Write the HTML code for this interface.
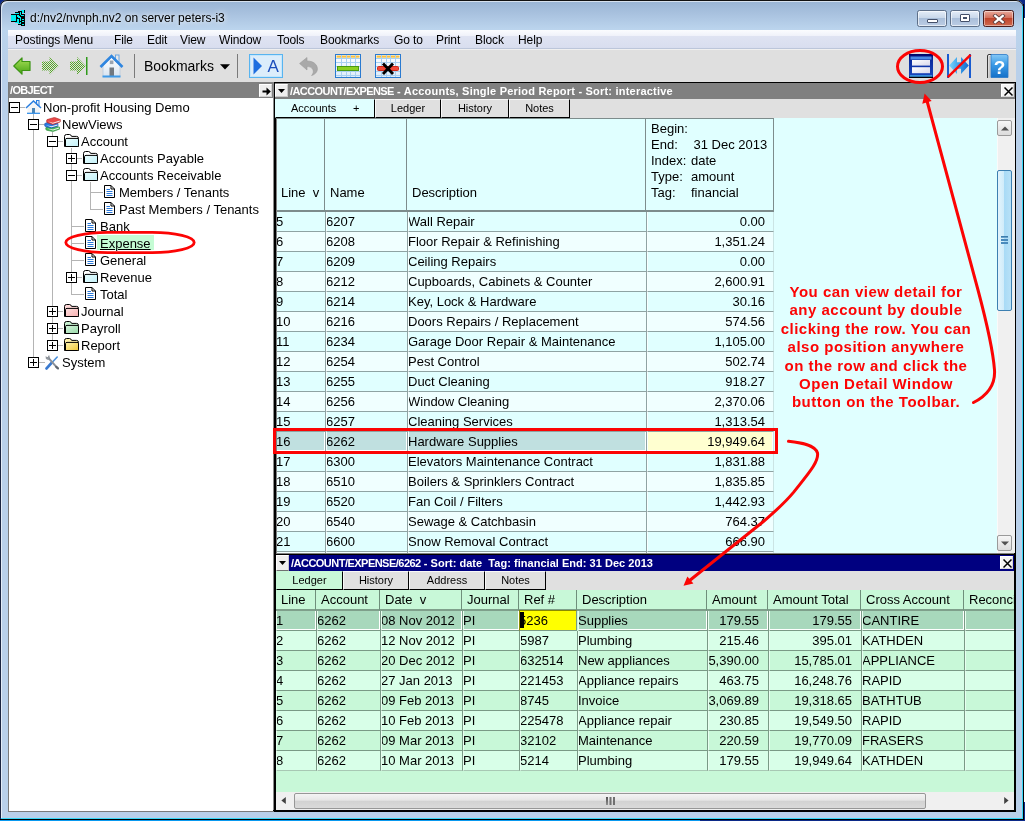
<!DOCTYPE html>
<html><head><meta charset="utf-8"><title>NewViews</title>
<style>
*{box-sizing:border-box;margin:0;padding:0}
html,body{width:1025px;height:821px;overflow:hidden;background:#0c2a88;font-family:"Liberation Sans",sans-serif;font-size:13px;color:#000}
.abs{position:absolute}
#win{will-change:transform;position:absolute;left:0;top:0;width:1023px;height:818px;border-radius:7px 7px 0 0;background:linear-gradient(#98b3d3 0px,#a9c2df 14px,#bbd4ed 29px,#b9d0ea 60px,#b9d0ea 100%);overflow:hidden;box-shadow:inset 0 1px 0 #111,inset 1px 0 0 #1a2440, inset 2px 2px 0 rgba(255,255,255,.6)}
#title{left:30px;top:10px;font-size:12px;line-height:16px;white-space:nowrap;color:#000;text-shadow:0 0 5px rgba(255,255,255,.9),0 0 8px rgba(255,255,255,.7)}
#menubar{left:8px;top:30px;width:1008px;height:19px;background:linear-gradient(#fbfcfe 0,#f0f2fa 30%,#dfe3f2 34%,#d9deef 92%,#bcc6da 96%,#bcc6da 100%)}
#menubar span{position:absolute;top:2px;font-size:12px;letter-spacing:-0.1px;line-height:16px;white-space:nowrap}
#toolbar{left:8px;top:49px;width:1008px;height:33px;background:#dfdfdf;border-top:1px solid #f0f0f0}
.phead{background:#808080;color:#fff;font-weight:bold;font-size:11px;line-height:16px;white-space:nowrap;overflow:hidden}
.tree{left:8px;top:98px;width:265px;height:713px;background:#fff}
.tree .t{position:absolute;white-space:nowrap;font-size:13px;line-height:17px;height:17px}
.vl{position:absolute;width:1px;background:#b4b4b4}
.hl{position:absolute;height:1px;background:#b4b4b4}
.box{position:absolute;width:11px;height:11px;border:1px solid #000;background:#fff}
.box:before{content:"";position:absolute;left:1px;top:4px;width:7px;height:1px;background:#000}
.box.p:after{content:"";position:absolute;left:4px;top:1px;width:1px;height:7px;background:#000}
.tabs{background:#e0e0e0}
.tab{position:absolute;top:0;height:19px;border:1px solid;border-color:#f8f8f8 #000 #000 #f8f8f8;background:#e0e0e0;font-size:11px;line-height:16px;text-align:center;white-space:nowrap}
.cell{position:absolute;height:20px;border-right:1px solid #8fa3a3;border-bottom:1px solid #8fa3a3;border-left:1px solid #f8ffff;line-height:19px;white-space:nowrap;overflow:hidden;font-size:13px;text-indent:-1px}
.cell.r{text-align:right}
.hc{position:absolute;border-right:1px solid #7d8c8c;border-bottom:2px solid #7d8c8c;white-space:nowrap;overflow:hidden;font-size:13px}
.sbtn{position:absolute;background:linear-gradient(#f6f6f6,#dcdcdc);border:1px solid #9a9a9a;border-radius:2px}
</style></head><body>
<div id="win">

<svg class="abs" style="left:9px;top:8px" width="16" height="18" viewBox="0 0 16 18" shape-rendering="crispEdges"><rect x="12" y="2" width="3" height="1" fill="#00f0f0"/><rect x="15" y="2" width="1" height="1" fill="#000"/><rect x="9" y="3" width="4" height="1" fill="#000"/><rect x="13" y="3" width="2" height="1" fill="#00f0f0"/><rect x="15" y="3" width="1" height="1" fill="#000"/><rect x="6" y="4" width="5" height="1" fill="#000"/><rect x="11" y="4" width="1" height="1" fill="#00f0f0"/><rect x="12" y="4" width="1" height="1" fill="#000"/><rect x="13" y="4" width="2" height="1" fill="#00f0f0"/><rect x="15" y="4" width="1" height="1" fill="#000"/><rect x="6" y="5" width="4" height="1" fill="#00f0f0"/><rect x="10" y="5" width="1" height="1" fill="#000"/><rect x="11" y="5" width="1" height="1" fill="#00f0f0"/><rect x="12" y="5" width="1" height="1" fill="#000"/><rect x="2" y="6" width="9" height="1" fill="#000"/><rect x="11" y="6" width="1" height="1" fill="#00f0f0"/><rect x="12" y="6" width="4" height="1" fill="#000"/><rect x="2" y="7" width="5" height="1" fill="#00f0f0"/><rect x="7" y="7" width="1" height="1" fill="#000"/><rect x="8" y="7" width="2" height="1" fill="#00f0f0"/><rect x="10" y="7" width="2" height="1" fill="#000"/><rect x="12" y="7" width="3" height="1" fill="#00f0f0"/><rect x="15" y="7" width="1" height="1" fill="#000"/><rect x="2" y="8" width="5" height="1" fill="#00f0f0"/><rect x="7" y="8" width="1" height="1" fill="#000"/><rect x="8" y="8" width="3" height="1" fill="#00f0f0"/><rect x="11" y="8" width="5" height="1" fill="#000"/><rect x="2" y="9" width="5" height="1" fill="#00f0f0"/><rect x="7" y="9" width="2" height="1" fill="#000"/><rect x="9" y="9" width="3" height="1" fill="#00f0f0"/><rect x="12" y="9" width="4" height="1" fill="#000"/><rect x="2" y="10" width="5" height="1" fill="#00f0f0"/><rect x="7" y="10" width="4" height="1" fill="#000"/><rect x="11" y="10" width="1" height="1" fill="#00f0f0"/><rect x="12" y="10" width="4" height="1" fill="#000"/><rect x="2" y="11" width="5" height="1" fill="#00f0f0"/><rect x="7" y="11" width="1" height="1" fill="#000"/><rect x="8" y="11" width="2" height="1" fill="#00f0f0"/><rect x="10" y="11" width="1" height="1" fill="#000"/><rect x="11" y="11" width="1" height="1" fill="#00f0f0"/><rect x="12" y="11" width="1" height="1" fill="#000"/><rect x="13" y="11" width="2" height="1" fill="#00f0f0"/><rect x="15" y="11" width="1" height="1" fill="#000"/><rect x="2" y="12" width="5" height="1" fill="#00f0f0"/><rect x="7" y="12" width="1" height="1" fill="#000"/><rect x="8" y="12" width="2" height="1" fill="#00f0f0"/><rect x="10" y="12" width="1" height="1" fill="#000"/><rect x="11" y="12" width="1" height="1" fill="#00f0f0"/><rect x="12" y="12" width="4" height="1" fill="#000"/><rect x="2" y="13" width="6" height="1" fill="#000"/><rect x="8" y="13" width="2" height="1" fill="#00f0f0"/><rect x="10" y="13" width="3" height="1" fill="#000"/><rect x="13" y="13" width="2" height="1" fill="#00f0f0"/><rect x="15" y="13" width="1" height="1" fill="#000"/><rect x="6" y="14" width="4" height="1" fill="#00f0f0"/><rect x="10" y="14" width="1" height="1" fill="#000"/><rect x="11" y="14" width="1" height="1" fill="#00f0f0"/><rect x="12" y="14" width="4" height="1" fill="#000"/><rect x="9" y="15" width="3" height="1" fill="#00f0f0"/><rect x="12" y="15" width="4" height="1" fill="#000"/><rect x="9" y="16" width="4" height="1" fill="#000"/><rect x="13" y="16" width="2" height="1" fill="#00f0f0"/><rect x="15" y="16" width="1" height="1" fill="#000"/><rect x="12" y="17" width="4" height="1" fill="#000"/></svg>
<div id="title" class="abs">d:/nv2/nvnph.nv2 on server peters-i3</div>
<div class="abs" style="left:917px;top:10px;width:30px;height:17px;border:1px solid #5d6f88;border-radius:2.5px;background:linear-gradient(#e4edf8 0,#c9d8ea 45%,#aabfda 50%,#bccde4 100%);box-shadow:inset 0 0 0 1px rgba(255,255,255,.6)"><div class="abs" style="left:9px;top:8px;width:11px;height:4px;border:1px solid #44506a;background:#fff;border-radius:1px"></div></div>
<div class="abs" style="left:950px;top:10px;width:30px;height:17px;border:1px solid #5d6f88;border-radius:2.5px;background:linear-gradient(#e4edf8 0,#c9d8ea 45%,#aabfda 50%,#bccde4 100%);box-shadow:inset 0 0 0 1px rgba(255,255,255,.6)"><div class="abs" style="left:9px;top:3px;width:10px;height:8px;border:1px solid #44506a;background:#fff;border-radius:1px"><div class="abs" style="left:2px;top:2px;width:4px;height:2px;border:1px solid #44506a;background:#c9d8ea"></div></div></div>
<div class="abs" style="left:983px;top:10px;width:31px;height:17px;border:1px solid #4a1c1c;border-radius:2.5px;background:linear-gradient(#e8a99b 0,#d4705c 45%,#c0442c 50%,#cf6a4e 100%);box-shadow:inset 0 0 0 1px rgba(255,255,255,.45)"><svg class="abs" style="left:8px;top:3px" width="14" height="10" viewBox="0 0 14 10"><path d="M3.2 1.8 L10.8 8.2 M10.8 1.8 L3.2 8.2" stroke="#5a3a3a" stroke-width="3.8" stroke-linecap="square"/><path d="M3.2 1.8 L10.8 8.2 M10.8 1.8 L3.2 8.2" stroke="#fff" stroke-width="2.2" stroke-linecap="square"/></svg></div>
<div id="menubar" class="abs">
<span style="left:7px">Postings Menu</span>
<span style="left:106px">File</span>
<span style="left:139px">Edit</span>
<span style="left:172px">View</span>
<span style="left:211px">Window</span>
<span style="left:269px">Tools</span>
<span style="left:312px">Bookmarks</span>
<span style="left:386px">Go to</span>
<span style="left:428px">Print</span>
<span style="left:467px">Block</span>
<span style="left:510px">Help</span>
</div>
<div id="toolbar" class="abs">
<svg class="abs" style="left:5px;top:7px" width="18" height="18" viewBox="0 0 18 18"><defs><linearGradient id="gg" x1="0" y1="0" x2="0" y2="1"><stop offset="0" stop-color="#a8e058"/><stop offset="1" stop-color="#48a414"/></linearGradient></defs><path d="M0.8 9 L9 0.8 L9 4.5 L17 4.5 L17 13.5 L9 13.5 L9 17.2 Z" fill="url(#gg)" stroke="#3c9414" stroke-width="1.2" stroke-linejoin="round"/></svg>
<svg class="abs" style="left:33px;top:7px" width="18" height="18" viewBox="0 0 18 18"><defs><pattern id="dots" width="2" height="2" patternUnits="userSpaceOnUse"><rect width="2" height="2" fill="#dfdfdf"/><rect width="1" height="1" fill="#58a82a"/><rect x="1" y="1" width="1" height="1" fill="#58a82a"/></pattern></defs><path d="M17.6 9 L8.5 0 L8.5 4.5 L1 4.5 L1 13.5 L8.5 13.5 L8.5 18 Z" fill="url(#dots)"/></svg>
<svg class="abs" style="left:61px;top:7px" width="19" height="18" viewBox="0 0 19 18"><path d="M16.8 9 L8 0 L8 4.5 L1 4.5 L1 13.5 L8 13.5 L8 18 Z" fill="url(#dots)"/><rect x="17" y="0" width="1.5" height="18" fill="#2e9a1a"/></svg>
<svg class="abs" style="left:91px;top:3px" width="25" height="25" viewBox="0 0 25 25"><defs><linearGradient id="hb" x1="0" y1="0" x2="0" y2="1"><stop offset="0" stop-color="#ffffff"/><stop offset="1" stop-color="#d8e4f0"/></linearGradient></defs><rect x="16.5" y="2" width="3.5" height="7" fill="#e8e8e8" stroke="#6aa6e4" stroke-width="1"/><path d="M4 13 L12.5 4.5 L21 13 L21 23.5 L4 23.5 Z" fill="url(#hb)" stroke="#b8c8dc" stroke-width="0.8"/><path d="M1.5 14 L12.5 3 L23.5 14" fill="none" stroke="#2f86e0" stroke-width="2.6" stroke-linejoin="miter"/><rect x="10.5" y="14.5" width="4.5" height="9" fill="#707880"/><rect x="10.8" y="7.5" width="3.6" height="3.6" fill="#9aa4b0"/><rect x="3.5" y="22.5" width="18" height="2" fill="#3f9ae8"/></svg>
<div class="abs" style="left:126px;top:4px;width:1px;height:24px;background:#7a7a7a"></div>
<div class="abs" style="left:136px;top:7px;font-size:14px;line-height:18px;white-space:nowrap">Bookmarks</div>
<svg class="abs" style="left:212px;top:14px" width="10" height="6" viewBox="0 0 10 6"><path d="M0 0.3 H10 L5 5.6 Z" fill="#000"/></svg>
<div class="abs" style="left:229px;top:4px;width:1px;height:24px;background:#7a7a7a"></div>
<div class="abs" style="left:241px;top:4px;width:34px;height:24px;border:1px solid #58b4f0;background:#dcedfb;box-shadow:inset 0 0 0 1px #c4e6fc"><svg class="abs" style="left:3px;top:2px" width="10" height="18" viewBox="0 0 10 18"><path d="M0.5 0.6 L9 9 L0.5 17.4 Z" fill="#1e6ee0"/></svg><div class="abs" style="left:17.5px;top:2px;font-size:17px;line-height:20px;color:#1c4ebc">A</div></div>
<svg class="abs" style="left:291px;top:7px" width="19" height="19" viewBox="0 0 19 19"><path d="M0.6 6.5 L8 0.5 L8 4 C14.5 4 18.4 7.5 18.4 12 C18.4 15 16 17.5 12.6 18.6 C14.4 16.4 14.8 14.4 13.8 12.4 C12.6 10 10.4 9.6 8 9.6 L8 13 Z" fill="#a9a9a9" stroke="#9a9a9a" stroke-width=".6"/></svg>
<svg class="abs" style="left:327px;top:4px" width="26" height="24" viewBox="0 0 26 24"><defs><linearGradient id="tgins" x1="0" y1="0" x2="0" y2="1"><stop offset="0" stop-color="#ffffff"/><stop offset="1" stop-color="#dcecfa"/></linearGradient></defs><rect x="0.5" y="0.5" width="25" height="23" fill="url(#tgins)" stroke="#2a7ad0" stroke-width="1"/><rect x="1.5" y="1.5" width="23" height="2.2" fill="#f8c040"/><rect x="6" y="1" width="1" height="22" fill="#a8d0f0"/><rect x="11" y="1" width="1" height="22" fill="#a8d0f0"/><rect x="15" y="1" width="1" height="22" fill="#a8d0f0"/><rect x="20" y="1" width="1" height="22" fill="#a8d0f0"/><rect x="1" y="4" width="24" height="1" fill="#a8d0f0"/><rect x="1" y="8" width="24" height="1" fill="#a8d0f0"/><rect x="1" y="12" width="24" height="1" fill="#a8d0f0"/><rect x="1" y="17" width="24" height="1" fill="#a8d0f0"/><rect x="1" y="21" width="24" height="1" fill="#a8d0f0"/><rect x="2.5" y="12.5" width="21" height="4" fill="#8cd020" stroke="#4a9a10" stroke-width="1"/></svg>
<svg class="abs" style="left:367px;top:4px" width="26" height="24" viewBox="0 0 26 24"><defs><linearGradient id="tgdel" x1="0" y1="0" x2="0" y2="1"><stop offset="0" stop-color="#ffffff"/><stop offset="1" stop-color="#dcecfa"/></linearGradient></defs><rect x="0.5" y="0.5" width="25" height="23" fill="url(#tgdel)" stroke="#2a7ad0" stroke-width="1"/><rect x="1.5" y="1.5" width="23" height="2.2" fill="#f8c040"/><rect x="6" y="1" width="1" height="22" fill="#a8d0f0"/><rect x="11" y="1" width="1" height="22" fill="#a8d0f0"/><rect x="15" y="1" width="1" height="22" fill="#a8d0f0"/><rect x="20" y="1" width="1" height="22" fill="#a8d0f0"/><rect x="1" y="4" width="24" height="1" fill="#a8d0f0"/><rect x="1" y="8" width="24" height="1" fill="#a8d0f0"/><rect x="1" y="12" width="24" height="1" fill="#a8d0f0"/><rect x="1" y="17" width="24" height="1" fill="#a8d0f0"/><rect x="1" y="21" width="24" height="1" fill="#a8d0f0"/><rect x="2.5" y="12.5" width="21" height="4" rx="1" fill="#f04a3a" stroke="#d02818" stroke-width="1"/><path d="M8 9.5 L18 20 M18 9.5 L8 20" stroke="#000" stroke-width="2.8"/></svg>
<svg class="abs" style="left:901px;top:4px" width="24" height="24" viewBox="0 0 24 24"><defs><linearGradient id="dw" x1="0" y1="0" x2="1" y2="1"><stop offset="0" stop-color="#ffffff"/><stop offset="1" stop-color="#d8d8ec"/></linearGradient><linearGradient id="dwf" x1="0" y1="0" x2="0" y2="1"><stop offset="0" stop-color="#000066"/><stop offset=".25" stop-color="#0a2a9c"/><stop offset="1" stop-color="#1a48c0"/></linearGradient></defs><rect x="0" y="0" width="24" height="23.5" fill="url(#dwf)"/><rect x="1.5" y="2.5" width="21" height="3" fill="#4a88e4"/><rect x="3" y="6" width="18" height="5.6" fill="url(#dw)"/><rect x="3" y="13.2" width="18" height="6" fill="url(#dw)"/><rect x="1" y="21.5" width="22" height="1" fill="#58d8f8"/><rect x="0" y="22.8" width="24" height="1.2" fill="#000"/></svg>
<svg class="abs" style="left:939px;top:4px" width="25" height="24" viewBox="0 0 25 24"><defs><linearGradient id="ca" x1="0" y1="0" x2="1" y2="0"><stop offset="0" stop-color="#7cd4fa"/><stop offset=".5" stop-color="#3aa0ea"/><stop offset="1" stop-color="#1468cc"/></linearGradient></defs><rect x="0" y="0" width="2" height="24" fill="#1a5cd0"/><rect x="22" y="0" width="2" height="24" fill="#1a5cd0"/><path d="M2.2 11.5 L10 3 L10 8.2 L14 8.2 L14 3 L21.8 11.5 L14 20 L14 14.8 L10 14.8 L10 20 Z" fill="url(#ca)"/><path d="M0.8 23.2 L23.6 0.8" stroke="#fc0404" stroke-width="2.4"/></svg>
<svg class="abs" style="left:979px;top:4px" width="22" height="24" viewBox="0 0 22 24"><defs><linearGradient id="hp" x1="0" y1="0" x2="0" y2="1"><stop offset="0" stop-color="#84c8f6"/><stop offset=".45" stop-color="#3a9ae6"/><stop offset="1" stop-color="#1470c8"/></linearGradient></defs><path d="M0.5 24 V2 Q0.5 0.5 2 0.5 H5" fill="#f0f0f0" stroke="#3a3a3a" stroke-width="1"/><rect x="1.5" y="2" width="2" height="22" fill="#c8c8c8"/><path d="M4 0.5 H19 Q21 0.5 21 2.5 V23.5 H4 Z" fill="url(#hp)" stroke="#2a78c8" stroke-width=".8"/><text x="12.5" y="20" font-family="Liberation Sans, sans-serif" font-weight="bold" font-size="19" fill="#fff" text-anchor="middle">?</text></svg>
</div>
<div class="abs phead" style="left:8px;top:82px;width:266px;height:17px;padding-left:2px;letter-spacing:-0.65px;line-height:17px">/OBJECT</div>
<div class="abs" style="left:259px;top:84px;width:13px;height:13px;background:#eee;border:1px solid;border-color:#fff #d0d0d0 #d0d0d0 #fff"><svg class="abs" style="left:2px;top:1.5px" width="9" height="9" viewBox="0 0 9 9"><path d="M0.5 3.6 H4.5 V0.6 L8.8 4.5 L4.5 8.4 V5.4 H0.5 Z" fill="#000"/></svg></div>
<div class="abs tree">
<div class="vl" style="left:25px;top:16px;height:248px"></div>
<div class="vl" style="left:44px;top:33px;height:214px"></div>
<div class="vl" style="left:63px;top:50px;height:146px"></div>
<div class="vl" style="left:82px;top:84px;height:27px"></div>
<div class="hl" style="left:6px;top:9px;width:12px"></div>
<div class="box m" style="left:1px;top:4px"></div>
<div class="abs" style="left:17px;top:2px;background:#fff;line-height:0"><svg width="17" height="14" viewBox="0 0 17 14"><rect x="11.5" y="0.5" width="2.5" height="5" fill="#e8eef6" stroke="#2a7fe0" stroke-width="1"/><path d="M2.5 7.5 L8.5 1.8 L14.5 7.5 L14.5 13 L2.5 13 Z" fill="#f2f4f6"/><path d="M1 8 L8.5 1 L16 8" fill="none" stroke="#2a7fe0" stroke-width="1.5"/><rect x="7" y="8" width="3" height="5" fill="#4a86b8"/><rect x="2" y="12.7" width="13" height="1.2" fill="#2a8ae8"/></svg></div>
<div class="t" style="left:35px;top:1px">Non-profit Housing Demo</div>
<div class="hl" style="left:25px;top:26px;width:12px"></div>
<div class="box m" style="left:20px;top:21px"></div>
<div class="abs" style="left:36px;top:19px;background:#fff;line-height:0"><svg width="17" height="15" viewBox="0 0 17 15"><path d="M2 10.5 L5.5 8.5 L15.5 10 L15.5 12.2 L9 14.5 L2.5 13.2 Q1 12 2 10.5 Z" fill="#48b858" stroke="#2a8a38" stroke-width=".6"/><path d="M9 13.6 L15 11.6 L15 10.6 L9 12.6 L3 11.6 Z" fill="#f4f4f4"/><path d="M0.8 6.5 L5 4.8 L14 6.5 L14 9 L7.5 11 L1.2 9.6 Q0 8 0.8 6.5 Z" fill="#2a78e0" stroke="#1a50a8" stroke-width=".6"/><path d="M7.5 10.2 L13.6 8.4 L13.6 7.4 L7.5 9.2 L2 8.2 Z" fill="#f4f4f4"/><path d="M3 2.6 L10.5 0.4 L16.4 2.6 L16.2 5 L8.8 7.6 L3 5.6 Q2 4 3 2.6 Z" fill="#e84848" stroke="#b02828" stroke-width=".6"/><path d="M8.8 6.8 L15.8 4.4 L15.8 3.4 L8.8 5.8 L4 4.4 Z" fill="#f8f0f0"/></svg></div>
<div class="t" style="left:54px;top:18px">NewViews</div>
<div class="hl" style="left:44px;top:43px;width:12px"></div>
<div class="box m" style="left:39px;top:38px"></div>
<div class="abs" style="left:55px;top:36px;background:#fff;line-height:0"><svg width="17" height="14" viewBox="0 0 17 14"><defs><linearGradient id="fe8feff" x1="0" y1="0" x2="1" y2="1"><stop offset="0" stop-color="#e8feff"/><stop offset="1" stop-color="#c4f0f8"/></linearGradient></defs><path d="M1.5 12.5 L1.5 2.5 Q1.5 0.5 3.5 0.5 L6.5 0.5 Q8 0.5 8.6 2.4 L13.5 2.4 Q15.5 2.4 15.5 4.4 L15.5 12.5 Z" fill="#fff" stroke="#000" stroke-width="1"/><path d="M2.5 12.5 L2.5 5.6 Q2.5 4.4 4 4.4 L14 4.4 Q15.5 4.4 15.5 5.6 L15.5 11.5 Q15.5 12.5 14.5 12.5 Z" fill="url(#fe8feff)" stroke="#000" stroke-width="1"/></svg></div>
<div class="t" style="left:73px;top:35px">Account</div>
<div class="hl" style="left:63px;top:60px;width:12px"></div>
<div class="box p" style="left:58px;top:55px"></div>
<div class="abs" style="left:74px;top:53px;background:#fff;line-height:0"><svg width="17" height="14" viewBox="0 0 17 14"><defs><linearGradient id="fe8feff" x1="0" y1="0" x2="1" y2="1"><stop offset="0" stop-color="#e8feff"/><stop offset="1" stop-color="#c4f0f8"/></linearGradient></defs><path d="M1.5 12.5 L1.5 2.5 Q1.5 0.5 3.5 0.5 L6.5 0.5 Q8 0.5 8.6 2.4 L13.5 2.4 Q15.5 2.4 15.5 4.4 L15.5 12.5 Z" fill="#fff" stroke="#000" stroke-width="1"/><path d="M2.5 12.5 L2.5 5.6 Q2.5 4.4 4 4.4 L14 4.4 Q15.5 4.4 15.5 5.6 L15.5 11.5 Q15.5 12.5 14.5 12.5 Z" fill="url(#fe8feff)" stroke="#000" stroke-width="1"/></svg></div>
<div class="t" style="left:92px;top:52px">Accounts Payable</div>
<div class="hl" style="left:63px;top:77px;width:12px"></div>
<div class="box m" style="left:58px;top:72px"></div>
<div class="abs" style="left:74px;top:70px;background:#fff;line-height:0"><svg width="17" height="14" viewBox="0 0 17 14"><defs><linearGradient id="fe8feff" x1="0" y1="0" x2="1" y2="1"><stop offset="0" stop-color="#e8feff"/><stop offset="1" stop-color="#c4f0f8"/></linearGradient></defs><path d="M1.5 12.5 L1.5 2.5 Q1.5 0.5 3.5 0.5 L6.5 0.5 Q8 0.5 8.6 2.4 L13.5 2.4 Q15.5 2.4 15.5 4.4 L15.5 12.5 Z" fill="#fff" stroke="#000" stroke-width="1"/><path d="M2.5 12.5 L2.5 5.6 Q2.5 4.4 4 4.4 L14 4.4 Q15.5 4.4 15.5 5.6 L15.5 11.5 Q15.5 12.5 14.5 12.5 Z" fill="url(#fe8feff)" stroke="#000" stroke-width="1"/></svg></div>
<div class="t" style="left:92px;top:69px">Accounts Receivable</div>
<div class="hl" style="left:82px;top:94px;width:13px"></div>
<div class="abs" style="left:96px;top:87px;width:11px;height:13px;background:#fff;line-height:0"><svg width="11" height="13" viewBox="0 0 11 13"><path d="M0.5 0.5 H7 L10.5 4 V12.5 H0.5 Z" fill="#fff" stroke="#000" stroke-width="1"/><path d="M7 0.5 V4 H10.5" fill="none" stroke="#000" stroke-width="1"/><path d="M2.5 4.5 H6 M2.5 6.5 H8.5 M2.5 8.5 H8.5 M2.5 10.5 H8.5" stroke="#2a78d8" stroke-width="1"/></svg></div>
<div class="t" style="left:111px;top:86px">Members / Tenants</div>
<div class="hl" style="left:82px;top:111px;width:13px"></div>
<div class="abs" style="left:96px;top:104px;width:11px;height:13px;background:#fff;line-height:0"><svg width="11" height="13" viewBox="0 0 11 13"><path d="M0.5 0.5 H7 L10.5 4 V12.5 H0.5 Z" fill="#fff" stroke="#000" stroke-width="1"/><path d="M7 0.5 V4 H10.5" fill="none" stroke="#000" stroke-width="1"/><path d="M2.5 4.5 H6 M2.5 6.5 H8.5 M2.5 8.5 H8.5 M2.5 10.5 H8.5" stroke="#2a78d8" stroke-width="1"/></svg></div>
<div class="t" style="left:111px;top:103px">Past Members / Tenants</div>
<div class="hl" style="left:63px;top:128px;width:13px"></div>
<div class="abs" style="left:77px;top:121px;width:11px;height:13px;background:#fff;line-height:0"><svg width="11" height="13" viewBox="0 0 11 13"><path d="M0.5 0.5 H7 L10.5 4 V12.5 H0.5 Z" fill="#fff" stroke="#000" stroke-width="1"/><path d="M7 0.5 V4 H10.5" fill="none" stroke="#000" stroke-width="1"/><path d="M2.5 4.5 H6 M2.5 6.5 H8.5 M2.5 8.5 H8.5 M2.5 10.5 H8.5" stroke="#2a78d8" stroke-width="1"/></svg></div>
<div class="t" style="left:92px;top:120px">Bank</div>
<div class="hl" style="left:63px;top:145px;width:13px"></div>
<div class="abs" style="left:77px;top:138px;width:11px;height:13px;background:#fff;line-height:0"><svg width="11" height="13" viewBox="0 0 11 13"><path d="M0.5 0.5 H7 L10.5 4 V12.5 H0.5 Z" fill="#fff" stroke="#000" stroke-width="1"/><path d="M7 0.5 V4 H10.5" fill="none" stroke="#000" stroke-width="1"/><path d="M2.5 4.5 H6 M2.5 6.5 H8.5 M2.5 8.5 H8.5 M2.5 10.5 H8.5" stroke="#2a78d8" stroke-width="1"/></svg></div>
<div class="t" style="left:89px;top:136px;background:#c4fcd4;padding:0 3px;height:15px;line-height:17px;margin-top:1px;text-decoration:underline">Expense</div>
<div class="hl" style="left:63px;top:162px;width:13px"></div>
<div class="abs" style="left:77px;top:155px;width:11px;height:13px;background:#fff;line-height:0"><svg width="11" height="13" viewBox="0 0 11 13"><path d="M0.5 0.5 H7 L10.5 4 V12.5 H0.5 Z" fill="#fff" stroke="#000" stroke-width="1"/><path d="M7 0.5 V4 H10.5" fill="none" stroke="#000" stroke-width="1"/><path d="M2.5 4.5 H6 M2.5 6.5 H8.5 M2.5 8.5 H8.5 M2.5 10.5 H8.5" stroke="#2a78d8" stroke-width="1"/></svg></div>
<div class="t" style="left:92px;top:154px">General</div>
<div class="hl" style="left:63px;top:179px;width:12px"></div>
<div class="box p" style="left:58px;top:174px"></div>
<div class="abs" style="left:74px;top:172px;background:#fff;line-height:0"><svg width="17" height="14" viewBox="0 0 17 14"><defs><linearGradient id="fe8feff" x1="0" y1="0" x2="1" y2="1"><stop offset="0" stop-color="#e8feff"/><stop offset="1" stop-color="#c4f0f8"/></linearGradient></defs><path d="M1.5 12.5 L1.5 2.5 Q1.5 0.5 3.5 0.5 L6.5 0.5 Q8 0.5 8.6 2.4 L13.5 2.4 Q15.5 2.4 15.5 4.4 L15.5 12.5 Z" fill="#fff" stroke="#000" stroke-width="1"/><path d="M2.5 12.5 L2.5 5.6 Q2.5 4.4 4 4.4 L14 4.4 Q15.5 4.4 15.5 5.6 L15.5 11.5 Q15.5 12.5 14.5 12.5 Z" fill="url(#fe8feff)" stroke="#000" stroke-width="1"/></svg></div>
<div class="t" style="left:92px;top:171px">Revenue</div>
<div class="hl" style="left:63px;top:196px;width:13px"></div>
<div class="abs" style="left:77px;top:189px;width:11px;height:13px;background:#fff;line-height:0"><svg width="11" height="13" viewBox="0 0 11 13"><path d="M0.5 0.5 H7 L10.5 4 V12.5 H0.5 Z" fill="#fff" stroke="#000" stroke-width="1"/><path d="M7 0.5 V4 H10.5" fill="none" stroke="#000" stroke-width="1"/><path d="M2.5 4.5 H6 M2.5 6.5 H8.5 M2.5 8.5 H8.5 M2.5 10.5 H8.5" stroke="#2a78d8" stroke-width="1"/></svg></div>
<div class="t" style="left:92px;top:188px">Total</div>
<div class="hl" style="left:44px;top:213px;width:12px"></div>
<div class="box p" style="left:39px;top:208px"></div>
<div class="abs" style="left:55px;top:206px;background:#fff;line-height:0"><svg width="17" height="14" viewBox="0 0 17 14"><defs><linearGradient id="fffe0e0" x1="0" y1="0" x2="1" y2="1"><stop offset="0" stop-color="#ffe0e0"/><stop offset="1" stop-color="#f8b0b0"/></linearGradient></defs><path d="M1.5 12.5 L1.5 2.5 Q1.5 0.5 3.5 0.5 L6.5 0.5 Q8 0.5 8.6 2.4 L13.5 2.4 Q15.5 2.4 15.5 4.4 L15.5 12.5 Z" fill="#ffd8d8" stroke="#000" stroke-width="1"/><path d="M2.5 12.5 L2.5 5.6 Q2.5 4.4 4 4.4 L14 4.4 Q15.5 4.4 15.5 5.6 L15.5 11.5 Q15.5 12.5 14.5 12.5 Z" fill="url(#fffe0e0)" stroke="#000" stroke-width="1"/></svg></div>
<div class="t" style="left:73px;top:205px">Journal</div>
<div class="hl" style="left:44px;top:230px;width:12px"></div>
<div class="box p" style="left:39px;top:225px"></div>
<div class="abs" style="left:55px;top:223px;background:#fff;line-height:0"><svg width="17" height="14" viewBox="0 0 17 14"><defs><linearGradient id="fd4f4dc" x1="0" y1="0" x2="1" y2="1"><stop offset="0" stop-color="#d4f4dc"/><stop offset="1" stop-color="#98d8a8"/></linearGradient></defs><path d="M1.5 12.5 L1.5 2.5 Q1.5 0.5 3.5 0.5 L6.5 0.5 Q8 0.5 8.6 2.4 L13.5 2.4 Q15.5 2.4 15.5 4.4 L15.5 12.5 Z" fill="#c8f0d0" stroke="#000" stroke-width="1"/><path d="M2.5 12.5 L2.5 5.6 Q2.5 4.4 4 4.4 L14 4.4 Q15.5 4.4 15.5 5.6 L15.5 11.5 Q15.5 12.5 14.5 12.5 Z" fill="url(#fd4f4dc)" stroke="#000" stroke-width="1"/></svg></div>
<div class="t" style="left:73px;top:222px">Payroll</div>
<div class="hl" style="left:44px;top:247px;width:12px"></div>
<div class="box p" style="left:39px;top:242px"></div>
<div class="abs" style="left:55px;top:240px;background:#fff;line-height:0"><svg width="17" height="14" viewBox="0 0 17 14"><defs><linearGradient id="ffff4b0" x1="0" y1="0" x2="1" y2="1"><stop offset="0" stop-color="#fff4b0"/><stop offset="1" stop-color="#f0c838"/></linearGradient></defs><path d="M1.5 12.5 L1.5 2.5 Q1.5 0.5 3.5 0.5 L6.5 0.5 Q8 0.5 8.6 2.4 L13.5 2.4 Q15.5 2.4 15.5 4.4 L15.5 12.5 Z" fill="#fff0a8" stroke="#000" stroke-width="1"/><path d="M2.5 12.5 L2.5 5.6 Q2.5 4.4 4 4.4 L14 4.4 Q15.5 4.4 15.5 5.6 L15.5 11.5 Q15.5 12.5 14.5 12.5 Z" fill="url(#ffff4b0)" stroke="#000" stroke-width="1"/></svg></div>
<div class="t" style="left:73px;top:239px">Report</div>
<div class="hl" style="left:25px;top:264px;width:12px"></div>
<div class="box p" style="left:20px;top:259px"></div>
<div class="abs" style="left:37px;top:257px;background:#fff;line-height:0"><svg width="14" height="15" viewBox="0 0 14 15"><path d="M12.2 2 L7.5 7" stroke="#4a90dc" stroke-width="1.6" stroke-linecap="round"/><path d="M6.8 7.6 L1.6 13.4" stroke="#3a7ad0" stroke-width="2.8" stroke-linecap="round"/><path d="M3.4 2.8 L12 12.6" stroke="#8a9098" stroke-width="2" stroke-linecap="round"/><path d="M1 1.6 Q0.4 4.6 3.4 4.6 Q5.2 3.2 4 0.6 L3 2.6 L2 2.8 Z" fill="#9aa0a8" stroke="#70767e" stroke-width=".5"/><path d="M11.2 11.8 L13 13.4" stroke="#60666e" stroke-width="2.2" stroke-linecap="round"/></svg></div>
<div class="t" style="left:54px;top:256px">System</div>
<svg class="abs" style="left:54px;top:131px" width="138" height="28" viewBox="0 0 138 28"><rect x="3.8" y="3.4" width="128.4" height="20.2" rx="42" ry="10.1" fill="none" stroke="#fc0404" stroke-width="2.8"/></svg>
</div>
<div class="abs" style="left:273px;top:82px;width:1px;height:729px;background:#8c8c8c"></div>
<div class="abs" style="left:274px;top:82px;width:1px;height:730px;background:#000"></div>
<div class="abs" style="left:275px;top:118px;width:1px;height:694px;background:#000"></div>
<div class="abs" style="left:274px;top:82px;width:742px;height:1px;background:#000"></div>
<div class="abs phead" style="left:275px;top:83px;width:740px;height:16px;padding-left:15px"><span style="letter-spacing:-0.58px">/ACCOUNT/EXPENSE</span><span style="letter-spacing:0.21px"> - Accounts, Single Period Report - Sort: interactive</span></div>
<div class="abs" style="left:275px;top:84px;width:13px;height:13px;background:#eee;border:1px solid;border-color:#fff #c8c8c8 #c8c8c8 #fff"><svg class="abs" style="left:2px;top:4px" width="7" height="4" viewBox="0 0 7 4"><path d="M0 0 H7 L3.5 4 Z" fill="#000"/></svg></div>
<div class="abs" style="left:1001px;top:84px;width:13px;height:13px;background:#f4f4f4;border:1px solid;border-color:#fff #d8d8d8 #d8d8d8 #fff"><svg class="abs" style="left:1.5px;top:1.5px" width="9" height="9" viewBox="0 0 9 9"><path d="M0.5 0.5 L8.5 8.5 M8.5 0.5 L0.5 8.5" stroke="#000" stroke-width="1.5"/></svg></div>
<div class="abs tabs" style="left:275px;top:99px;width:740px;height:19px">
<div class="tab" style="left:0px;width:100px;background:#e0ffff;border-top-color:#e0ffff;border-left-color:#e0ffff;"><span style="position:absolute;left:15px">Accounts</span><span style="position:absolute;left:77px">+</span></div>
<div class="tab" style="left:100px;width:66px;">Ledger</div>
<div class="tab" style="left:166px;width:68px;">History</div>
<div class="tab" style="left:234px;width:61px;">Notes</div>
</div>
<div class="abs" style="left:276px;top:118px;width:721px;height:435px;background:#e0ffff;overflow:hidden">
<div class="hc" style="left:0px;top:0;width:49px;height:94px;padding:66px 0 0 5px;line-height:16px;border-top:1px solid #7d8c8c">Line&nbsp;&nbsp;v</div>
<div class="hc" style="left:49px;top:0;width:82px;height:94px;padding:66px 0 0 5px;line-height:16px;border-top:1px solid #7d8c8c">Name</div>
<div class="hc" style="left:131px;top:0;width:239px;height:94px;padding:66px 0 0 5px;line-height:16px;border-top:1px solid #7d8c8c">Description</div>
<div class="hc" style="left:370px;top:0;width:128px;height:94px;padding:66px 0 0 5px;line-height:16px;border-top:1px solid #7d8c8c"></div>
<div class="abs" style="left:375px;top:2.5px;font-size:13px;line-height:16px;white-space:pre">Begin:
End:
Index:
Type:
Tag:</div>
<div class="abs" style="left:415px;top:2.5px;font-size:13px;line-height:16px;white-space:pre">
<span style="padding-left:2.5px">31 Dec 2013</span>
date
amount
financial</div>
<div class="cell" style="left:0px;top:94px;width:50px;background:#e0ffff;">5</div>
<div class="cell" style="left:50px;top:94px;width:82px;background:#e0ffff;">6207</div>
<div class="cell" style="left:132px;top:94px;width:239px;background:#e0ffff;">Wall Repair</div>
<div class="cell r" style="left:371px;top:94px;width:127px;background:#e0ffff;padding-right:8px;border-right-color:#cbe4e4;">0.00</div>
<div class="cell" style="left:0px;top:114px;width:50px;background:#f0ffff;">6</div>
<div class="cell" style="left:50px;top:114px;width:82px;background:#f0ffff;">6208</div>
<div class="cell" style="left:132px;top:114px;width:239px;background:#f0ffff;">Floor Repair &amp; Refinishing</div>
<div class="cell r" style="left:371px;top:114px;width:127px;background:#f0ffff;padding-right:8px;border-right-color:#cbe4e4;">1,351.24</div>
<div class="cell" style="left:0px;top:134px;width:50px;background:#e0ffff;">7</div>
<div class="cell" style="left:50px;top:134px;width:82px;background:#e0ffff;">6209</div>
<div class="cell" style="left:132px;top:134px;width:239px;background:#e0ffff;">Ceiling Repairs</div>
<div class="cell r" style="left:371px;top:134px;width:127px;background:#e0ffff;padding-right:8px;border-right-color:#cbe4e4;">0.00</div>
<div class="cell" style="left:0px;top:154px;width:50px;background:#f0ffff;">8</div>
<div class="cell" style="left:50px;top:154px;width:82px;background:#f0ffff;">6212</div>
<div class="cell" style="left:132px;top:154px;width:239px;background:#f0ffff;">Cupboards, Cabinets &amp; Counter</div>
<div class="cell r" style="left:371px;top:154px;width:127px;background:#f0ffff;padding-right:8px;border-right-color:#cbe4e4;">2,600.91</div>
<div class="cell" style="left:0px;top:174px;width:50px;background:#e0ffff;">9</div>
<div class="cell" style="left:50px;top:174px;width:82px;background:#e0ffff;">6214</div>
<div class="cell" style="left:132px;top:174px;width:239px;background:#e0ffff;">Key, Lock &amp; Hardware</div>
<div class="cell r" style="left:371px;top:174px;width:127px;background:#e0ffff;padding-right:8px;border-right-color:#cbe4e4;">30.16</div>
<div class="cell" style="left:0px;top:194px;width:50px;background:#f0ffff;">10</div>
<div class="cell" style="left:50px;top:194px;width:82px;background:#f0ffff;">6216</div>
<div class="cell" style="left:132px;top:194px;width:239px;background:#f0ffff;">Doors Repairs / Replacement</div>
<div class="cell r" style="left:371px;top:194px;width:127px;background:#f0ffff;padding-right:8px;border-right-color:#cbe4e4;">574.56</div>
<div class="cell" style="left:0px;top:214px;width:50px;background:#e0ffff;">11</div>
<div class="cell" style="left:50px;top:214px;width:82px;background:#e0ffff;">6234</div>
<div class="cell" style="left:132px;top:214px;width:239px;background:#e0ffff;">Garage Door Repair &amp; Maintenance</div>
<div class="cell r" style="left:371px;top:214px;width:127px;background:#e0ffff;padding-right:8px;border-right-color:#cbe4e4;">1,105.00</div>
<div class="cell" style="left:0px;top:234px;width:50px;background:#f0ffff;">12</div>
<div class="cell" style="left:50px;top:234px;width:82px;background:#f0ffff;">6254</div>
<div class="cell" style="left:132px;top:234px;width:239px;background:#f0ffff;">Pest Control</div>
<div class="cell r" style="left:371px;top:234px;width:127px;background:#f0ffff;padding-right:8px;border-right-color:#cbe4e4;">502.74</div>
<div class="cell" style="left:0px;top:254px;width:50px;background:#e0ffff;">13</div>
<div class="cell" style="left:50px;top:254px;width:82px;background:#e0ffff;">6255</div>
<div class="cell" style="left:132px;top:254px;width:239px;background:#e0ffff;">Duct Cleaning</div>
<div class="cell r" style="left:371px;top:254px;width:127px;background:#e0ffff;padding-right:8px;border-right-color:#cbe4e4;">918.27</div>
<div class="cell" style="left:0px;top:274px;width:50px;background:#f0ffff;">14</div>
<div class="cell" style="left:50px;top:274px;width:82px;background:#f0ffff;">6256</div>
<div class="cell" style="left:132px;top:274px;width:239px;background:#f0ffff;">Window Cleaning</div>
<div class="cell r" style="left:371px;top:274px;width:127px;background:#f0ffff;padding-right:8px;border-right-color:#cbe4e4;">2,370.06</div>
<div class="cell" style="left:0px;top:294px;width:50px;background:#e0ffff;">15</div>
<div class="cell" style="left:50px;top:294px;width:82px;background:#e0ffff;">6257</div>
<div class="cell" style="left:132px;top:294px;width:239px;background:#e0ffff;">Cleaning Services</div>
<div class="cell r" style="left:371px;top:294px;width:127px;background:#e0ffff;padding-right:8px;border-right-color:#cbe4e4;">1,313.54</div>
<div class="cell" style="left:0px;top:314px;width:50px;background:#c0e0e0;box-shadow:inset -1px -1px 0 #fff;">16</div>
<div class="cell" style="left:50px;top:314px;width:82px;background:#c0e0e0;box-shadow:inset -1px -1px 0 #fff;">6262</div>
<div class="cell" style="left:132px;top:314px;width:239px;background:#c0e0e0;box-shadow:inset -1px -1px 0 #fff;">Hardware Supplies</div>
<div class="cell r" style="left:371px;top:314px;width:127px;background:#ffffd0;padding-right:8px;border-right-color:#cbe4e4;box-shadow:inset -1px -1px 0 #fff;">19,949.64</div>
<div class="cell" style="left:0px;top:334px;width:50px;background:#e0ffff;">17</div>
<div class="cell" style="left:50px;top:334px;width:82px;background:#e0ffff;">6300</div>
<div class="cell" style="left:132px;top:334px;width:239px;background:#e0ffff;">Elevators Maintenance Contract</div>
<div class="cell r" style="left:371px;top:334px;width:127px;background:#e0ffff;padding-right:8px;border-right-color:#cbe4e4;">1,831.88</div>
<div class="cell" style="left:0px;top:354px;width:50px;background:#f0ffff;">18</div>
<div class="cell" style="left:50px;top:354px;width:82px;background:#f0ffff;">6510</div>
<div class="cell" style="left:132px;top:354px;width:239px;background:#f0ffff;">Boilers &amp; Sprinklers Contract</div>
<div class="cell r" style="left:371px;top:354px;width:127px;background:#f0ffff;padding-right:8px;border-right-color:#cbe4e4;">1,835.85</div>
<div class="cell" style="left:0px;top:374px;width:50px;background:#e0ffff;">19</div>
<div class="cell" style="left:50px;top:374px;width:82px;background:#e0ffff;">6520</div>
<div class="cell" style="left:132px;top:374px;width:239px;background:#e0ffff;">Fan Coil / Filters</div>
<div class="cell r" style="left:371px;top:374px;width:127px;background:#e0ffff;padding-right:8px;border-right-color:#cbe4e4;">1,442.93</div>
<div class="cell" style="left:0px;top:394px;width:50px;background:#f0ffff;">20</div>
<div class="cell" style="left:50px;top:394px;width:82px;background:#f0ffff;">6540</div>
<div class="cell" style="left:132px;top:394px;width:239px;background:#f0ffff;">Sewage &amp; Catchbasin</div>
<div class="cell r" style="left:371px;top:394px;width:127px;background:#f0ffff;padding-right:8px;border-right-color:#cbe4e4;">764.37</div>
<div class="cell" style="left:0px;top:414px;width:50px;background:#e0ffff;">21</div>
<div class="cell" style="left:50px;top:414px;width:82px;background:#e0ffff;">6600</div>
<div class="cell" style="left:132px;top:414px;width:239px;background:#e0ffff;">Snow Removal Contract</div>
<div class="cell r" style="left:371px;top:414px;width:127px;background:#e0ffff;padding-right:8px;border-right-color:#cbe4e4;">666.90</div>
<div class="cell" style="left:0px;top:434px;width:50px;background:#f0ffff;">22</div>
<div class="cell" style="left:50px;top:434px;width:82px;background:#f0ffff;">6610</div>
<div class="cell" style="left:132px;top:434px;width:239px;background:#f0ffff;">Landscaping</div>
<div class="cell r" style="left:371px;top:434px;width:127px;background:#f0ffff;padding-right:8px;border-right-color:#cbe4e4;">0.00</div>
</div>
<div class="abs" style="left:276px;top:118px;width:1px;height:435px;background:#808080"></div>
<div class="abs" style="left:997px;top:118px;width:18px;height:435px;background:#f0f0f0;border-left:1px solid #fafafa"></div>
<div class="sbtn" style="left:997px;top:120px;width:15px;height:16px"><svg class="abs" style="left:3px;top:5px" width="8" height="5" viewBox="0 0 8 5"><path d="M0 4.6 L4 0.4 L8 4.6 Z" fill="#505050"/></svg></div>
<div class="abs" style="left:997px;top:170px;width:15px;height:141px;border:1px solid #3c7fb1;border-radius:2px;background:linear-gradient(90deg,#e3f4fc 0,#d0ecfa 45%,#a9dbf6 50%,#b8e1f7 100%)"><div class="abs" style="left:3px;top:65px;width:7px;height:2px;background:linear-gradient(#2a6a9c,#7ab4dc);box-shadow:0 3px 0 #4a8abc,0 6px 0 #4a8abc"></div></div>
<div class="sbtn" style="left:997px;top:535px;width:15px;height:16px"><svg class="abs" style="left:3px;top:5px" width="8" height="5" viewBox="0 0 8 5"><path d="M0 0.4 L4 4.6 L8 0.4 Z" fill="#505050"/></svg></div>
<div class="abs" style="left:276px;top:553px;width:739px;height:1px;background:#808080"></div><div class="abs" style="left:274px;top:554px;width:742px;height:1px;background:#000"></div>
<div class="abs phead" style="left:276px;top:555px;width:740px;height:16px;background:#000080;padding-left:15px"><span style="letter-spacing:-0.52px">/ACCOUNT/EXPENSE/6262</span><span style="letter-spacing:0.03px"> - Sort: date&nbsp; Tag: financial End: 31 Dec 2013</span></div>
<div class="abs" style="left:276px;top:555px;width:13px;height:16px;background:#eee;border:1px solid;border-color:#fff #c8c8c8 #707070 #fff"><svg class="abs" style="left:2px;top:4.5px" width="7" height="4" viewBox="0 0 7 4"><path d="M0 0 H7 L3.5 4 Z" fill="#000"/></svg></div>
<div class="abs" style="left:1000px;top:556px;width:13px;height:13px;background:#f4f4f4;border:1px solid;border-color:#fff #d8d8d8 #d8d8d8 #fff"><svg class="abs" style="left:1.5px;top:1.5px" width="9" height="9" viewBox="0 0 9 9"><path d="M0.5 0.5 L8.5 8.5 M8.5 0.5 L0.5 8.5" stroke="#000" stroke-width="1.5"/></svg></div>
<div class="abs tabs" style="left:276px;top:571px;width:738px;height:19px">
<div class="tab" style="left:0px;width:67px;top:0;background:#c8f8d8;border-top-color:#c8f8d8;border-left-color:#c8f8d8;">Ledger</div>
<div class="tab" style="left:67px;width:66px;top:0;">History</div>
<div class="tab" style="left:133px;width:76px;top:0;">Address</div>
<div class="tab" style="left:209px;width:61px;top:0;">Notes</div>
</div>
<div class="abs" style="left:276px;top:590px;width:738px;height:202px;background:#c8f8d8;overflow:hidden">
<div class="hc" style="left:0px;top:0;width:40px;height:21px;padding:0 0 0 5px;line-height:19px;border-color:#6f8f7b;border-bottom:2px solid #7f9f8b">Line</div>
<div class="hc" style="left:40px;top:0;width:64px;height:21px;padding:0 0 0 5px;line-height:19px;border-color:#6f8f7b;border-bottom:2px solid #7f9f8b">Account</div>
<div class="hc" style="left:104px;top:0;width:82px;height:21px;padding:0 0 0 5px;line-height:19px;border-color:#6f8f7b;border-bottom:2px solid #7f9f8b">Date&nbsp;&nbsp;v</div>
<div class="hc" style="left:186px;top:0;width:57px;height:21px;padding:0 0 0 5px;line-height:19px;border-color:#6f8f7b;border-bottom:2px solid #7f9f8b">Journal</div>
<div class="hc" style="left:243px;top:0;width:58px;height:21px;padding:0 0 0 5px;line-height:19px;border-color:#6f8f7b;border-bottom:2px solid #7f9f8b">Ref #</div>
<div class="hc" style="left:301px;top:0;width:130px;height:21px;padding:0 0 0 5px;line-height:19px;border-color:#6f8f7b;border-bottom:2px solid #7f9f8b">Description</div>
<div class="hc" style="left:431px;top:0;width:61px;height:21px;padding:0 0 0 5px;line-height:19px;border-color:#6f8f7b;border-bottom:2px solid #7f9f8b">Amount</div>
<div class="hc" style="left:492px;top:0;width:93px;height:21px;padding:0 0 0 5px;line-height:19px;border-color:#6f8f7b;border-bottom:2px solid #7f9f8b">Amount Total</div>
<div class="hc" style="left:585px;top:0;width:103px;height:21px;padding:0 0 0 5px;line-height:19px;border-color:#6f8f7b;border-bottom:2px solid #7f9f8b">Cross Account</div>
<div class="hc" style="left:688px;top:0;width:76px;height:21px;padding:0 0 0 5px;line-height:19px;border-color:#6f8f7b;border-bottom:2px solid #7f9f8b">Reconciled</div>
<div class="cell" style="left:0px;top:21px;width:41px;background:#a8d8bc;border-right-color:#7a9a86;border-bottom-color:#7a9a86;border-left-color:#e8fff0;box-shadow:inset -1px -1px 0 #fff;">1</div>
<div class="cell" style="left:41px;top:21px;width:64px;background:#a8d8bc;border-right-color:#7a9a86;border-bottom-color:#7a9a86;border-left-color:#e8fff0;box-shadow:inset -1px -1px 0 #fff;">6262</div>
<div class="cell" style="left:105px;top:21px;width:82px;background:#a8d8bc;border-right-color:#7a9a86;border-bottom-color:#7a9a86;border-left-color:#e8fff0;box-shadow:inset -1px -1px 0 #fff;">08 Nov 2012</div>
<div class="cell" style="left:187px;top:21px;width:57px;background:#a8d8bc;border-right-color:#7a9a86;border-bottom-color:#7a9a86;border-left-color:#e8fff0;box-shadow:inset -1px -1px 0 #fff;">PI</div>
<div class="cell" style="left:243px;top:20px;width:58px;height:21px;line-height:20px;background:#ffff00;border-right-color:#7a9a86;border-bottom-color:#7a9a86;border-left-color:#e8fff0;border-top:1px solid #8a8a00;border-left-color:#8a8a00"><span class="abs" style="left:0;top:1px;width:4px;height:16px;background:#000"></span>5236</div>
<div class="cell" style="left:302px;top:21px;width:130px;background:#a8d8bc;border-right-color:#7a9a86;border-bottom-color:#7a9a86;border-left-color:#e8fff0;box-shadow:inset -1px -1px 0 #fff;">Supplies</div>
<div class="cell r" style="left:432px;top:21px;width:61px;background:#a8d8bc;border-right-color:#7a9a86;border-bottom-color:#7a9a86;border-left-color:#e8fff0;padding-right:9px;box-shadow:inset -1px -1px 0 #fff;">179.55</div>
<div class="cell r" style="left:493px;top:21px;width:93px;background:#a8d8bc;border-right-color:#7a9a86;border-bottom-color:#7a9a86;border-left-color:#e8fff0;padding-right:9px;box-shadow:inset -1px -1px 0 #fff;">179.55</div>
<div class="cell" style="left:586px;top:21px;width:103px;background:#a8d8bc;border-right-color:#7a9a86;border-bottom-color:#7a9a86;border-left-color:#e8fff0;box-shadow:inset -1px -1px 0 #fff;">CANTIRE</div>
<div class="cell" style="left:689px;top:21px;width:75px;background:#a8d8bc;border-right-color:#7a9a86;border-bottom-color:#7a9a86;border-left-color:#e8fff0;box-shadow:inset -1px -1px 0 #fff;"></div>
<div class="cell" style="left:0px;top:41px;width:41px;background:#d8ffe8;border-right-color:#7a9a86;border-bottom-color:#7a9a86;border-left-color:#e8fff0;">2</div>
<div class="cell" style="left:41px;top:41px;width:64px;background:#d8ffe8;border-right-color:#7a9a86;border-bottom-color:#7a9a86;border-left-color:#e8fff0;">6262</div>
<div class="cell" style="left:105px;top:41px;width:82px;background:#d8ffe8;border-right-color:#7a9a86;border-bottom-color:#7a9a86;border-left-color:#e8fff0;">12 Nov 2012</div>
<div class="cell" style="left:187px;top:41px;width:57px;background:#d8ffe8;border-right-color:#7a9a86;border-bottom-color:#7a9a86;border-left-color:#e8fff0;">PI</div>
<div class="cell" style="left:244px;top:41px;width:58px;background:#d8ffe8;border-right-color:#7a9a86;border-bottom-color:#7a9a86;border-left-color:#e8fff0;">5987</div>
<div class="cell" style="left:302px;top:41px;width:130px;background:#d8ffe8;border-right-color:#7a9a86;border-bottom-color:#7a9a86;border-left-color:#e8fff0;">Plumbing</div>
<div class="cell r" style="left:432px;top:41px;width:61px;background:#d8ffe8;border-right-color:#7a9a86;border-bottom-color:#7a9a86;border-left-color:#e8fff0;padding-right:9px;">215.46</div>
<div class="cell r" style="left:493px;top:41px;width:93px;background:#d8ffe8;border-right-color:#7a9a86;border-bottom-color:#7a9a86;border-left-color:#e8fff0;padding-right:9px;">395.01</div>
<div class="cell" style="left:586px;top:41px;width:103px;background:#d8ffe8;border-right-color:#7a9a86;border-bottom-color:#7a9a86;border-left-color:#e8fff0;">KATHDEN</div>
<div class="cell" style="left:689px;top:41px;width:75px;background:#d8ffe8;border-right-color:#7a9a86;border-bottom-color:#7a9a86;border-left-color:#e8fff0;"></div>
<div class="cell" style="left:0px;top:61px;width:41px;background:#c8f8d8;border-right-color:#7a9a86;border-bottom-color:#7a9a86;border-left-color:#e8fff0;">3</div>
<div class="cell" style="left:41px;top:61px;width:64px;background:#c8f8d8;border-right-color:#7a9a86;border-bottom-color:#7a9a86;border-left-color:#e8fff0;">6262</div>
<div class="cell" style="left:105px;top:61px;width:82px;background:#c8f8d8;border-right-color:#7a9a86;border-bottom-color:#7a9a86;border-left-color:#e8fff0;">20 Dec 2012</div>
<div class="cell" style="left:187px;top:61px;width:57px;background:#c8f8d8;border-right-color:#7a9a86;border-bottom-color:#7a9a86;border-left-color:#e8fff0;">PI</div>
<div class="cell" style="left:244px;top:61px;width:58px;background:#c8f8d8;border-right-color:#7a9a86;border-bottom-color:#7a9a86;border-left-color:#e8fff0;">632514</div>
<div class="cell" style="left:302px;top:61px;width:130px;background:#c8f8d8;border-right-color:#7a9a86;border-bottom-color:#7a9a86;border-left-color:#e8fff0;">New appliances</div>
<div class="cell r" style="left:432px;top:61px;width:61px;background:#c8f8d8;border-right-color:#7a9a86;border-bottom-color:#7a9a86;border-left-color:#e8fff0;padding-right:9px;">5,390.00</div>
<div class="cell r" style="left:493px;top:61px;width:93px;background:#c8f8d8;border-right-color:#7a9a86;border-bottom-color:#7a9a86;border-left-color:#e8fff0;padding-right:9px;">15,785.01</div>
<div class="cell" style="left:586px;top:61px;width:103px;background:#c8f8d8;border-right-color:#7a9a86;border-bottom-color:#7a9a86;border-left-color:#e8fff0;">APPLIANCE</div>
<div class="cell" style="left:689px;top:61px;width:75px;background:#c8f8d8;border-right-color:#7a9a86;border-bottom-color:#7a9a86;border-left-color:#e8fff0;"></div>
<div class="cell" style="left:0px;top:81px;width:41px;background:#d8ffe8;border-right-color:#7a9a86;border-bottom-color:#7a9a86;border-left-color:#e8fff0;">4</div>
<div class="cell" style="left:41px;top:81px;width:64px;background:#d8ffe8;border-right-color:#7a9a86;border-bottom-color:#7a9a86;border-left-color:#e8fff0;">6262</div>
<div class="cell" style="left:105px;top:81px;width:82px;background:#d8ffe8;border-right-color:#7a9a86;border-bottom-color:#7a9a86;border-left-color:#e8fff0;">27 Jan 2013</div>
<div class="cell" style="left:187px;top:81px;width:57px;background:#d8ffe8;border-right-color:#7a9a86;border-bottom-color:#7a9a86;border-left-color:#e8fff0;">PI</div>
<div class="cell" style="left:244px;top:81px;width:58px;background:#d8ffe8;border-right-color:#7a9a86;border-bottom-color:#7a9a86;border-left-color:#e8fff0;">221453</div>
<div class="cell" style="left:302px;top:81px;width:130px;background:#d8ffe8;border-right-color:#7a9a86;border-bottom-color:#7a9a86;border-left-color:#e8fff0;">Appliance repairs</div>
<div class="cell r" style="left:432px;top:81px;width:61px;background:#d8ffe8;border-right-color:#7a9a86;border-bottom-color:#7a9a86;border-left-color:#e8fff0;padding-right:9px;">463.75</div>
<div class="cell r" style="left:493px;top:81px;width:93px;background:#d8ffe8;border-right-color:#7a9a86;border-bottom-color:#7a9a86;border-left-color:#e8fff0;padding-right:9px;">16,248.76</div>
<div class="cell" style="left:586px;top:81px;width:103px;background:#d8ffe8;border-right-color:#7a9a86;border-bottom-color:#7a9a86;border-left-color:#e8fff0;">RAPID</div>
<div class="cell" style="left:689px;top:81px;width:75px;background:#d8ffe8;border-right-color:#7a9a86;border-bottom-color:#7a9a86;border-left-color:#e8fff0;"></div>
<div class="cell" style="left:0px;top:101px;width:41px;background:#c8f8d8;border-right-color:#7a9a86;border-bottom-color:#7a9a86;border-left-color:#e8fff0;">5</div>
<div class="cell" style="left:41px;top:101px;width:64px;background:#c8f8d8;border-right-color:#7a9a86;border-bottom-color:#7a9a86;border-left-color:#e8fff0;">6262</div>
<div class="cell" style="left:105px;top:101px;width:82px;background:#c8f8d8;border-right-color:#7a9a86;border-bottom-color:#7a9a86;border-left-color:#e8fff0;">09 Feb 2013</div>
<div class="cell" style="left:187px;top:101px;width:57px;background:#c8f8d8;border-right-color:#7a9a86;border-bottom-color:#7a9a86;border-left-color:#e8fff0;">PI</div>
<div class="cell" style="left:244px;top:101px;width:58px;background:#c8f8d8;border-right-color:#7a9a86;border-bottom-color:#7a9a86;border-left-color:#e8fff0;">8745</div>
<div class="cell" style="left:302px;top:101px;width:130px;background:#c8f8d8;border-right-color:#7a9a86;border-bottom-color:#7a9a86;border-left-color:#e8fff0;">Invoice</div>
<div class="cell r" style="left:432px;top:101px;width:61px;background:#c8f8d8;border-right-color:#7a9a86;border-bottom-color:#7a9a86;border-left-color:#e8fff0;padding-right:9px;">3,069.89</div>
<div class="cell r" style="left:493px;top:101px;width:93px;background:#c8f8d8;border-right-color:#7a9a86;border-bottom-color:#7a9a86;border-left-color:#e8fff0;padding-right:9px;">19,318.65</div>
<div class="cell" style="left:586px;top:101px;width:103px;background:#c8f8d8;border-right-color:#7a9a86;border-bottom-color:#7a9a86;border-left-color:#e8fff0;">BATHTUB</div>
<div class="cell" style="left:689px;top:101px;width:75px;background:#c8f8d8;border-right-color:#7a9a86;border-bottom-color:#7a9a86;border-left-color:#e8fff0;"></div>
<div class="cell" style="left:0px;top:121px;width:41px;background:#d8ffe8;border-right-color:#7a9a86;border-bottom-color:#7a9a86;border-left-color:#e8fff0;">6</div>
<div class="cell" style="left:41px;top:121px;width:64px;background:#d8ffe8;border-right-color:#7a9a86;border-bottom-color:#7a9a86;border-left-color:#e8fff0;">6262</div>
<div class="cell" style="left:105px;top:121px;width:82px;background:#d8ffe8;border-right-color:#7a9a86;border-bottom-color:#7a9a86;border-left-color:#e8fff0;">10 Feb 2013</div>
<div class="cell" style="left:187px;top:121px;width:57px;background:#d8ffe8;border-right-color:#7a9a86;border-bottom-color:#7a9a86;border-left-color:#e8fff0;">PI</div>
<div class="cell" style="left:244px;top:121px;width:58px;background:#d8ffe8;border-right-color:#7a9a86;border-bottom-color:#7a9a86;border-left-color:#e8fff0;">225478</div>
<div class="cell" style="left:302px;top:121px;width:130px;background:#d8ffe8;border-right-color:#7a9a86;border-bottom-color:#7a9a86;border-left-color:#e8fff0;">Appliance repair</div>
<div class="cell r" style="left:432px;top:121px;width:61px;background:#d8ffe8;border-right-color:#7a9a86;border-bottom-color:#7a9a86;border-left-color:#e8fff0;padding-right:9px;">230.85</div>
<div class="cell r" style="left:493px;top:121px;width:93px;background:#d8ffe8;border-right-color:#7a9a86;border-bottom-color:#7a9a86;border-left-color:#e8fff0;padding-right:9px;">19,549.50</div>
<div class="cell" style="left:586px;top:121px;width:103px;background:#d8ffe8;border-right-color:#7a9a86;border-bottom-color:#7a9a86;border-left-color:#e8fff0;">RAPID</div>
<div class="cell" style="left:689px;top:121px;width:75px;background:#d8ffe8;border-right-color:#7a9a86;border-bottom-color:#7a9a86;border-left-color:#e8fff0;"></div>
<div class="cell" style="left:0px;top:141px;width:41px;background:#c8f8d8;border-right-color:#7a9a86;border-bottom-color:#7a9a86;border-left-color:#e8fff0;">7</div>
<div class="cell" style="left:41px;top:141px;width:64px;background:#c8f8d8;border-right-color:#7a9a86;border-bottom-color:#7a9a86;border-left-color:#e8fff0;">6262</div>
<div class="cell" style="left:105px;top:141px;width:82px;background:#c8f8d8;border-right-color:#7a9a86;border-bottom-color:#7a9a86;border-left-color:#e8fff0;">09 Mar 2013</div>
<div class="cell" style="left:187px;top:141px;width:57px;background:#c8f8d8;border-right-color:#7a9a86;border-bottom-color:#7a9a86;border-left-color:#e8fff0;">PI</div>
<div class="cell" style="left:244px;top:141px;width:58px;background:#c8f8d8;border-right-color:#7a9a86;border-bottom-color:#7a9a86;border-left-color:#e8fff0;">32102</div>
<div class="cell" style="left:302px;top:141px;width:130px;background:#c8f8d8;border-right-color:#7a9a86;border-bottom-color:#7a9a86;border-left-color:#e8fff0;">Maintenance</div>
<div class="cell r" style="left:432px;top:141px;width:61px;background:#c8f8d8;border-right-color:#7a9a86;border-bottom-color:#7a9a86;border-left-color:#e8fff0;padding-right:9px;">220.59</div>
<div class="cell r" style="left:493px;top:141px;width:93px;background:#c8f8d8;border-right-color:#7a9a86;border-bottom-color:#7a9a86;border-left-color:#e8fff0;padding-right:9px;">19,770.09</div>
<div class="cell" style="left:586px;top:141px;width:103px;background:#c8f8d8;border-right-color:#7a9a86;border-bottom-color:#7a9a86;border-left-color:#e8fff0;">FRASERS</div>
<div class="cell" style="left:689px;top:141px;width:75px;background:#c8f8d8;border-right-color:#7a9a86;border-bottom-color:#7a9a86;border-left-color:#e8fff0;"></div>
<div class="cell" style="left:0px;top:161px;width:41px;background:#d8ffe8;border-right-color:#7a9a86;border-bottom-color:#a8c8b4;border-left-color:#e8fff0;">8</div>
<div class="cell" style="left:41px;top:161px;width:64px;background:#d8ffe8;border-right-color:#7a9a86;border-bottom-color:#a8c8b4;border-left-color:#e8fff0;">6262</div>
<div class="cell" style="left:105px;top:161px;width:82px;background:#d8ffe8;border-right-color:#7a9a86;border-bottom-color:#a8c8b4;border-left-color:#e8fff0;">10 Mar 2013</div>
<div class="cell" style="left:187px;top:161px;width:57px;background:#d8ffe8;border-right-color:#7a9a86;border-bottom-color:#a8c8b4;border-left-color:#e8fff0;">PI</div>
<div class="cell" style="left:244px;top:161px;width:58px;background:#d8ffe8;border-right-color:#7a9a86;border-bottom-color:#a8c8b4;border-left-color:#e8fff0;">5214</div>
<div class="cell" style="left:302px;top:161px;width:130px;background:#d8ffe8;border-right-color:#7a9a86;border-bottom-color:#a8c8b4;border-left-color:#e8fff0;">Plumbing</div>
<div class="cell r" style="left:432px;top:161px;width:61px;background:#d8ffe8;border-right-color:#7a9a86;border-bottom-color:#a8c8b4;border-left-color:#e8fff0;padding-right:9px;">179.55</div>
<div class="cell r" style="left:493px;top:161px;width:93px;background:#d8ffe8;border-right-color:#7a9a86;border-bottom-color:#a8c8b4;border-left-color:#e8fff0;padding-right:9px;">19,949.64</div>
<div class="cell" style="left:586px;top:161px;width:103px;background:#d8ffe8;border-right-color:#7a9a86;border-bottom-color:#a8c8b4;border-left-color:#e8fff0;">KATHDEN</div>
<div class="cell" style="left:689px;top:161px;width:75px;background:#d8ffe8;border-right-color:#7a9a86;border-bottom-color:#a8c8b4;border-left-color:#e8fff0;"></div>
</div>
<div class="abs" style="left:276px;top:792px;width:738px;height:18px;background:#f0f0f0"></div>
<svg class="abs" style="left:281px;top:797px" width="5" height="7" viewBox="0 0 5 7"><path d="M4.8 0 L0.4 3.5 L4.8 7 Z" fill="#404040"/></svg>
<svg class="abs" style="left:1004px;top:797px" width="5" height="7" viewBox="0 0 5 7"><path d="M0.2 0 L4.6 3.5 L0.2 7 Z" fill="#404040"/></svg>
<div class="abs" style="left:294px;top:793px;width:632px;height:16px;border:1px solid #979797;border-radius:2px;background:linear-gradient(#f4f4f4 0,#e6e6e6 45%,#d2d2d2 50%,#dadada 100%)"><div class="abs" style="left:311px;top:3px;width:2px;height:8px;background:linear-gradient(#505050,#909090);box-shadow:3.5px 0 0 #707070,7px 0 0 #707070"></div></div>
<div class="abs" style="left:1015px;top:82px;width:1px;height:472px;background:#000"></div>
<div class="abs" style="left:1014px;top:553px;width:2px;height:258px;background:#000"></div>
<div class="abs" style="left:273px;top:810px;width:743px;height:2px;background:#000"></div>
<div class="abs" style="left:8px;top:811px;width:266px;height:1px;background:#7a7a7a"></div>
<div class="abs" style="left:8px;top:82px;width:1px;height:730px;background:#7a7a7a"></div>
<svg class="abs" style="left:0;top:0;pointer-events:none" width="1025" height="821" viewBox="0 0 1025 821">
<g fill="none" stroke="#fc0404" stroke-linecap="round" stroke-linejoin="round">
<ellipse cx="920" cy="66.5" rx="22.5" ry="16" stroke-width="3"/>
<rect x="274.5" y="429.5" width="502" height="23" stroke-width="3" stroke-linejoin="miter"/>
<path d="M926.5 99 L978 290 C986 320 993 350 994.5 370 C995.5 385 988 395 973.5 402.5" stroke-width="3"/>
<path d="M788.5 441.3 C800 442.5 815 444.5 817.5 453 C819 462 808 474 793.5 492.4 C783 505 772 514 762.8 522 L689 581" stroke-width="3"/>
</g>
<path d="M924.6 93.5 L922.3 103.8 L931.6 101 Z" fill="#fc0404"/>
<path d="M683.5 585.8 L687.4 576.6 L693.4 583.4 Z" fill="#fc0404"/>
<g font-family="Liberation Sans, sans-serif" font-weight="bold" font-size="15" letter-spacing="0.5" fill="#fc0404" text-anchor="middle">
<text x="876" y="297.0">You can view detail for</text>
<text x="876" y="315.4">any account by double</text>
<text x="876" y="333.8">clicking the row. You can</text>
<text x="876" y="352.2">also position anywhere</text>
<text x="876" y="370.6">on the row and click the</text>
<text x="876" y="389.0">Open Detail Window</text>
<text x="876" y="407.4">button on the Toolbar.</text>
</g></svg>
</div>
<div class="abs" style="left:1022px;top:6px;width:1px;height:813px;background:#38d8f8"></div>
<div class="abs" style="left:1023px;top:4px;width:1px;height:816px;background:#000"></div>
<div class="abs" style="left:1024px;top:18px;width:1px;height:784px;background:#fff"></div>
<div class="abs" style="left:1px;top:818px;width:1022px;height:1px;background:#38d8f8"></div>
<div class="abs" style="left:0;top:819px;width:1024px;height:1px;background:#000"></div>
<div class="abs" style="left:0;top:820px;width:700px;height:1px;background:#0a9af0"></div>
</body></html>
